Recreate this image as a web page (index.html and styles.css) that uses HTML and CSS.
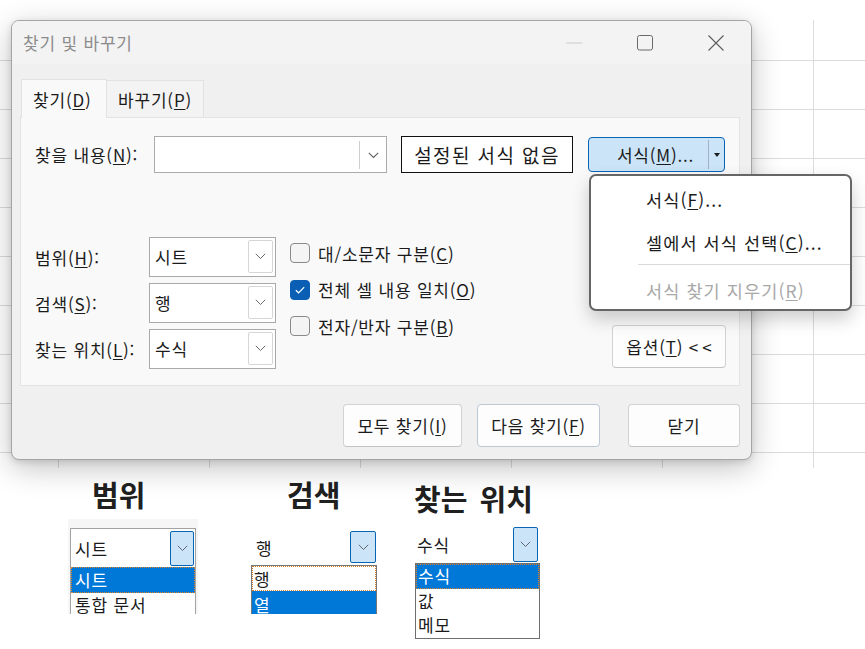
FILE: index.html
```html
<!DOCTYPE html>
<html lang="ko">
<head>
<meta charset="utf-8">
<title>찾기 및 바꾸기</title>
<link rel="stylesheet" href="styles.css">
</head>
<body>
<div class="stage">
  <div class="sheet"></div>

  <div class="dialog">
    <div class="titlebar">
      <span class="title">찾기 및 바꾸기</span>
      <div class="winbtns">
        <span class="wb"><svg width="16" height="2" viewBox="0 0 16 2"><path d="M0 1H16" stroke="#cacaca" stroke-width="1"/></svg></span>
        <span class="wb"><svg width="16" height="16" viewBox="0 0 16 16"><rect x="0.5" y="0.5" width="15" height="14.5" rx="2" fill="none" stroke="#6a6a6a" stroke-width="1"/></svg></span>
        <span class="wb"><svg width="16" height="16" viewBox="0 0 16 16"><path d="M0.5 0.5L15.5 15.5M15.5 0.5L0.5 15.5" stroke="#5c5c5c" stroke-width="1.1"/></svg></span>
      </div>
    </div>

    <div class="dbody">
      <div class="tabs">
        <div class="tab active">찾기(<u>D</u>)</div>
        <div class="tab">바꾸기(<u>P</u>)</div>
      </div>

      <div class="panel">
        <div class="row-find">
          <span class="lbl lbl-find">찾을 내용(<u>N</u>):</span>
          <div class="findbox">
            <span class="fb-sep"></span>
            <span class="fb-chev"><svg width="11" height="7" viewBox="0 0 11 7"><path d="M0.8 0.8L5.5 5.5L10.2 0.8" fill="none" stroke="#5f5f5f" stroke-width="1.1"/></svg></span>
          </div>
          <div class="preview">설정된 서식 없음</div>
          <div class="split">
            <span class="split-main">서식(<u>M</u>)...</span>
            <span class="split-sep"></span>
            <span class="split-arrow"></span>
          </div>
        </div>

        <div class="row-opts">
          <div class="combos">
            <div class="crow">
              <span class="lbl lbl-c">범위(<u>H</u>):</span>
              <div class="combo"><span class="cval">시트</span><span class="cbtn"><svg width="11" height="7" viewBox="0 0 11 7"><path d="M0.8 0.8L5.5 5.5L10.2 0.8" fill="none" stroke="#6a6a6a" stroke-width="1"/></svg></span></div>
            </div>
            <div class="crow">
              <span class="lbl lbl-c">검색(<u>S</u>):</span>
              <div class="combo"><span class="cval">행</span><span class="cbtn"><svg width="11" height="7" viewBox="0 0 11 7"><path d="M0.8 0.8L5.5 5.5L10.2 0.8" fill="none" stroke="#6a6a6a" stroke-width="1"/></svg></span></div>
            </div>
            <div class="crow">
              <span class="lbl lbl-c">찾는 위치(<u>L</u>):</span>
              <div class="combo"><span class="cval">수식</span><span class="cbtn"><svg width="11" height="7" viewBox="0 0 11 7"><path d="M0.8 0.8L5.5 5.5L10.2 0.8" fill="none" stroke="#6a6a6a" stroke-width="1"/></svg></span></div>
            </div>
          </div>

          <div class="checks">
            <div class="chk"><span class="box"></span><span>대/소문자 구분(<u>C</u>)</span></div>
            <div class="chk"><span class="box on"><svg width="12" height="10" viewBox="0 0 12 10"><path d="M1.8 5.2L4.6 7.8L10.2 2.2" fill="none" stroke="#ffffff" stroke-width="1.2"/></svg></span><span>전체 셀 내용 일치(<u>O</u>)</span></div>
            <div class="chk"><span class="box"></span><span>전자/반자 구분(<u>B</u>)</span></div>
          </div>

          <div class="optcol">
            <button class="btn btn-opt">옵션(<u>T</u>) <span class="chev2">&lt;&lt;</span></button>
          </div>
        </div>
      </div>

      <div class="actions">
        <button class="btn btn-all">모두 찾기(<u>I</u>)</button>
        <button class="btn btn-next">다음 찾기(<u>F</u>)</button>
        <button class="btn btn-close">닫기</button>
      </div>
    </div>

    <div class="menu">
      <div class="mi">서식(<u>F</u>)...</div>
      <div class="mi">셀에서 서식 선택(<u>C</u>)...</div>
      <div class="msep"></div>
      <div class="mi dis">서식 찾기 지우기(<u>R</u>)</div>
    </div>
  </div>
</div>

<div class="legend">
  <div class="lg lg1">
    <div class="lg-h">범위</div>
    <div class="dd dd1">
      <div class="dd-field">
        <span class="dd-val">시트</span>
        <span class="dd-btn"><svg width="11" height="7" viewBox="0 0 11 7"><path d="M0.8 0.8L5.5 5.5L10.2 0.8" fill="none" stroke="#5f6670" stroke-width="1"/></svg></span>
      </div>
      <div class="dd-list">
        <div class="dd-item sel focus">시트</div>
        <div class="dd-item last">통합 문서</div>
      </div>
    </div>
  </div>

  <div class="lg lg2">
    <div class="lg-h">검색</div>
    <div class="dd dd2">
      <div class="dd-field">
        <span class="dd-val">행</span>
        <span class="dd-btn"><svg width="11" height="7" viewBox="0 0 11 7"><path d="M0.8 0.8L5.5 5.5L10.2 0.8" fill="none" stroke="#5f6670" stroke-width="1"/></svg></span>
      </div>
      <div class="dd-list">
        <div class="dd-item focus">행</div>
        <div class="dd-item sel last">열</div>
      </div>
    </div>
  </div>

  <div class="lg lg3">
    <div class="lg-h">찾는 위치</div>
    <div class="dd dd3">
      <div class="dd-field">
        <span class="dd-val">수식</span>
        <span class="dd-btn"><svg width="11" height="7" viewBox="0 0 11 7"><path d="M0.8 0.8L5.5 5.5L10.2 0.8" fill="none" stroke="#5f6670" stroke-width="1"/></svg></span>
      </div>
      <div class="dd-list">
        <div class="dd-item sel focus">수식</div>
        <div class="dd-item">값</div>
        <div class="dd-item">메모</div>
      </div>
    </div>
  </div>
</div>
</body>
</html>
```

FILE: styles.css
```css
* { box-sizing: border-box; }

html, body {
  margin: 0;
  padding: 0;
  background: #ffffff;
}

body {
  width: 865px;
  height: 649px;
  overflow: hidden;
  font-family: "Noto Sans CJK KR", "Noto Sans", sans-serif;
  font-size: 17px;
  letter-spacing: 0.8px;
  color: #1b1b1b;
}

u { text-decoration: underline; text-underline-offset: 2px; text-decoration-thickness: 1px; }

/* ---------- spreadsheet behind the dialog ---------- */
.stage {
  position: relative;
  height: 468px;
  padding-top: 20px;
}

.sheet {
  height: 448px;
  background-color: #ffffff;
  background-image:
    linear-gradient(to right, #dcdcdc 1px, transparent 1px),
    linear-gradient(to bottom, #dcdcdc 1px, transparent 1px);
  background-size: 151px 49px;
  background-position: 58px 40px;
}

/* ---------- dialog window ---------- */
.dialog {
  position: absolute;
  left: 11px;
  top: 20px;
  width: 741px;
  height: 440px;
  background: #f0f0f0;
  border: 1px solid #a5a5a5;
  border-radius: 8px;
  box-shadow: 0 8px 30px rgba(0, 0, 0, 0.24), 0 2px 6px rgba(0, 0, 0, 0.12);
}

.titlebar {
  height: 43px;
  display: flex;
  align-items: center;
  padding-left: 11px;
  background: #f3f3f3;
  border-radius: 7px 7px 0 0;
}

.title {
  color: #8c8c8c;
}

.winbtns {
  margin-left: auto;
  display: flex;
  height: 100%;
}

.wb {
  width: 71px;
  height: 100%;
  display: flex;
  align-items: center;
  justify-content: center;
}

.dbody {
  padding: 15px 11px 0 8px;
}

/* tabs */
.tabs {
  display: flex;
  align-items: flex-end;
  height: 38px;
  padding-left: 1px;
}

.tab {
  height: 37px;
  display: flex;
  align-items: center;
  padding-left: 11px;
  border: 1px solid #e2e2e2;
  border-bottom: none;
  background: #f3f3f3;
  white-space: nowrap;
}

.tab.active {
  width: 86px;
  height: 39px;
  margin-bottom: -1px;
  background: #f9f9f9;
  position: relative;
  z-index: 1;
}

.tab:not(.active) {
  width: 97px;
  border-left: none;
}

/* panel */
.panel {
  width: 720px;
  height: 269px;
  background: #f9f9f9;
  border: 1px solid #e3e3e3;
  padding: 18px 13px 0 14px;
}

.row-find {
  display: flex;
  align-items: center;
  height: 37px;
}

.lbl { white-space: nowrap; }
.lbl-find { width: 119px; }

.findbox {
  width: 233px;
  height: 37px;
  background: #ffffff;
  border: 1px solid #ababab;
  display: flex;
  align-items: center;
  justify-content: flex-end;
}

.fb-sep {
  width: 1px;
  height: 28px;
  background: #cfcfcf;
}

.fb-chev {
  width: 26px;
  display: flex;
  justify-content: center;
  padding-top: 1px;
}

.preview {
  width: 172px;
  height: 37px;
  margin-left: 14px;
  background: #ffffff;
  border: 1.5px solid #111111;
  display: flex;
  align-items: center;
  justify-content: center;
  font-size: 19px;
  letter-spacing: 1.4px;
  white-space: nowrap;
}

.split {
  width: 137px;
  height: 35px;
  margin-left: 15px;
  background: #cce4f7;
  border: 1px solid #0a64b4;
  border-radius: 4px;
  display: flex;
  align-items: center;
}

.split-main {
  flex: 1;
  text-align: center;
  padding-left: 14px;
  white-space: nowrap;
}

.split-sep {
  width: 1px;
  height: 29px;
  background: #9fb3c4;
}

.split-arrow {
  width: 15px;
  display: flex;
  justify-content: center;
}

.split-arrow::before {
  content: "";
  border-left: 3.5px solid transparent;
  border-right: 3.5px solid transparent;
  border-top: 4px solid #1b1b1b;
}

/* lower options */
.row-opts {
  display: flex;
  margin-top: 64px;
}

.combos {
  display: flex;
  flex-direction: column;
  gap: 6px;
}

.crow {
  display: flex;
  align-items: center;
}

.lbl-c { width: 114px; }

.combo {
  width: 127px;
  height: 40px;
  background: #ffffff;
  border: 1px solid #a9a9a9;
  display: flex;
  align-items: center;
  padding: 2px 2px 3px 5px;
}

.cval { flex: 1; }

.cbtn {
  width: 25px;
  height: 100%;
  border: 1px solid #d6d6d6;
  border-radius: 2px;
  display: flex;
  align-items: center;
  justify-content: center;
}

.checks {
  margin-left: 14px;
  padding-top: 6px;
  display: flex;
  flex-direction: column;
  gap: 16.5px;
}

.chk {
  display: flex;
  align-items: center;
  gap: 8px;
  height: 20px;
  white-space: nowrap;
}

.box {
  width: 20px;
  height: 20px;
  border: 1px solid #8a8a8a;
  border-radius: 4px;
  background: #f4f4f4;
  display: flex;
  align-items: center;
  justify-content: center;
}

.box.on {
  background: #0a5fb4;
  border-color: #0a5fb4;
}

.optcol {
  margin-left: auto;
  display: flex;
  align-items: flex-end;
  padding-bottom: 1px;
}

.btn {
  font: inherit;
  letter-spacing: inherit;
  color: #1b1b1b;
  background: #fdfdfd;
  border: 1px solid #d2d2d2;
  border-bottom-color: #c4c4c4;
  border-radius: 4px;
  padding: 0;
  height: 43px;
  display: flex;
  align-items: center;
  justify-content: center;
  white-space: pre;
}

.chev2 { letter-spacing: 4px; margin-right: -4px; }

.btn-opt { width: 114px; }

.actions {
  display: flex;
  justify-content: flex-end;
  margin-top: 18px;
}

.btn-all { width: 119px; }
.btn-next { width: 123px; margin-left: 15px; border-color: #bcc8d4; }
.btn-close { width: 112px; margin-left: 28px; }

/* format dropdown menu (overlay) */
.menu {
  position: absolute;
  left: 577px;
  top: 153px;
  width: 263px;
  height: 137px;
  background: #ffffff;
  border: 2px solid #666666;
  border-radius: 7px;
  box-shadow: 0 8px 18px rgba(0, 0, 0, 0.2);
  padding-top: 8px;
  font-size: 17.5px;
  letter-spacing: 1.1px;
}

.mi {
  height: 30px;
  display: flex;
  align-items: center;
  padding-left: 55px;
  white-space: nowrap;
}

.mi + .mi { margin-top: 13px; }

.msep {
  height: 1px;
  background: #d9d9d9;
  margin: 7px 0 10px 47px;
}

.mi.dis { color: #a8a8a8; }

/* ---------- legend below the screenshot ---------- */
.legend {
  display: flex;
  align-items: flex-start;
}

.lg-h {
  font-size: 29px;
  font-weight: 700;
  line-height: 32px;
  letter-spacing: 0;
  word-spacing: 4px;
  color: #202020;
  margin-top: 10px;
  white-space: nowrap;
}

.lg1 { margin-left: 68px; width: 130px; }
.lg1 .lg-h { padding-left: 24px; }
.lg2 { margin-left: 52px; width: 128px; }
.lg2 .lg-h { padding-left: 37px; }
.lg3 { margin-left: 37px; width: 125px; }
.lg3 .lg-h { margin-top: 14px; margin-left: -1px; }

.dd-field {
  display: flex;
  align-items: center;
  background: #ffffff;
}

.dd-val { flex: 1; white-space: nowrap; }

.dd-btn {
  background: #cce4f7;
  border: 1px solid #0a64b4;
  border-radius: 2px;
  display: flex;
  align-items: center;
  justify-content: center;
}

.dd-list {
  background: #ffffff;
}

.dd-item {
  height: 25px;
  display: flex;
  align-items: center;
  padding-left: 4px;
  border: 1px solid transparent;
  white-space: nowrap;
  line-height: 20px;
}

.dd-item.last {
  align-items: flex-end;
  line-height: 19px;
}

.dd-item.sel {
  background: #0078d7;
  color: #ffffff;
}

.dd-item.focus {
  border: 1px dotted #d9822b;
}

/* 범위 */
.dd1 {
  margin-top: 9px;
  background: #f6f6f6;
  padding: 9px 2px 0;
}
.dd1 .dd-field {
  height: 39px;
  border: 1px solid #a3a3a3;
  border-bottom: none;
  padding: 2px 1px 2px 4px;
}
.dd1 .dd-btn { width: 24px; height: 35px; }
.dd1 .dd-list {
  height: 47px;
  border-left: 1px solid #a3a3a3;
  border-right: 1px solid #a3a3a3;
}
.dd1 .dd-item { height: 26px; padding-left: 3px; }
.dd1 .dd-item.last { height: 21px; border-bottom: none; }

/* 검색 */
.dd2 { margin-top: 19px; }
.dd2 .dd-field {
  height: 36px;
  padding: 0 2px 0 6px;
}
.dd2 .dd-btn { width: 26px; height: 32px; }
.dd2 .dd-list {
  margin: 0 1px;
  height: 49px;
  border: 1px solid #767676;
  border-bottom: none;
}
.dd2 .dd-item { height: 25px; padding-left: 1px; }
.dd2 .dd-item.last { height: 23px; border-bottom: none; }

/* 찾는 위치 */
.dd3 { margin-top: 12px; }
.dd3 .dd-field {
  height: 37px;
  padding: 0 2px 0 2px;
}
.dd3 .dd-btn { width: 25px; height: 35px; }
.dd3 .dd-list {
  height: 76px;
  border: 1px solid #6e6e6e;
}
.dd3 .dd-item { height: 24.6px; padding-left: 1px; }
```
